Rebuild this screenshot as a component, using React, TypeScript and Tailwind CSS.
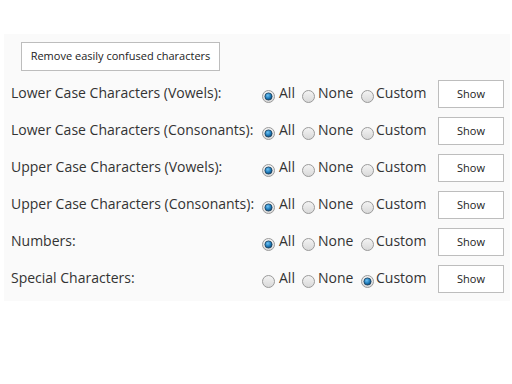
import React from 'react';

type Choice = 'all' | 'none' | 'custom';

interface Row {
  label: string;
  value: Choice;
}

const rows: Row[] = [
  { label: 'Lower Case Characters (Vowels):', value: 'all' },
  { label: 'Lower Case Characters (Consonants):', value: 'all' },
  { label: 'Upper Case Characters (Vowels):', value: 'all' },
  { label: 'Upper Case Characters (Consonants):', value: 'all' },
  { label: 'Numbers:', value: 'all' },
  { label: 'Special Characters:', value: 'custom' },
];

const Radio: React.FC<{ checked: boolean }> = ({ checked }) => (
  <svg width="13" height="13" viewBox="0 0 13 13" className="translate-y-[4px] shrink-0">
    <defs>
      <linearGradient id="rb" x1="0" y1="0" x2="0" y2="1">
        <stop offset="0" stopColor="#f4f4f4" />
        <stop offset="1" stopColor="#d8d8d8" />
      </linearGradient>
      <radialGradient id="dot" cx="0.4" cy="0.35" r="0.7">
        <stop offset="0" stopColor="#6fc3f5" />
        <stop offset="0.6" stopColor="#1c79b8" />
        <stop offset="1" stopColor="#0d3f66" />
      </radialGradient>
    </defs>
    <circle cx="6.5" cy="6.5" r="6" fill="url(#rb)" stroke="#9a9a9a" strokeWidth="1" />
    {checked && <circle cx="6.5" cy="6.5" r="3.6" fill="url(#dot)" stroke="#1d3f5a" strokeWidth="0.8" />}
  </svg>
);

export default function App() {
  return (
    <div
      className="w-[512px] h-[384px] bg-white pt-[34px] pl-[4px]"
      style={{ fontFamily: '"Open Sans", "Noto Sans", sans-serif' }}
    >
      <div className="w-[506px] bg-[#fafafa] pt-[8px] pb-[8px] pl-[7px] pr-[6px]">
        <button className="ml-[10px] h-[29px] w-[199px] border border-[#bdbdbd] bg-white text-[11px] text-[#222]">
          Remove easily confused characters
        </button>

        <div className="mt-[9px] flex flex-col gap-[9px]">
          {rows.map((row) => (
            <div key={row.label} className="flex items-center h-[28px]">
              <span className="w-[251px] whitespace-nowrap text-[14px] text-[#333] -translate-y-[2px]">{row.label}</span>
              <div className="flex items-center text-[14px] text-[#333] -translate-y-[2px]">
                <Radio checked={row.value === 'all'} />
                <span className="ml-[4px] w-[23px]">All</span>
                <Radio checked={row.value === 'none'} />
                <span className="ml-[3px] w-[43px]">None</span>
                <Radio checked={row.value === 'custom'} />
                <span className="ml-[2px]">Custom</span>
              </div>
              <button className="ml-auto h-[28px] w-[66px] border border-[#bdbdbd] bg-white text-[11px] text-[#222]">
                Show
              </button>
            </div>
          ))}
        </div>
      </div>
    </div>
  );
}
